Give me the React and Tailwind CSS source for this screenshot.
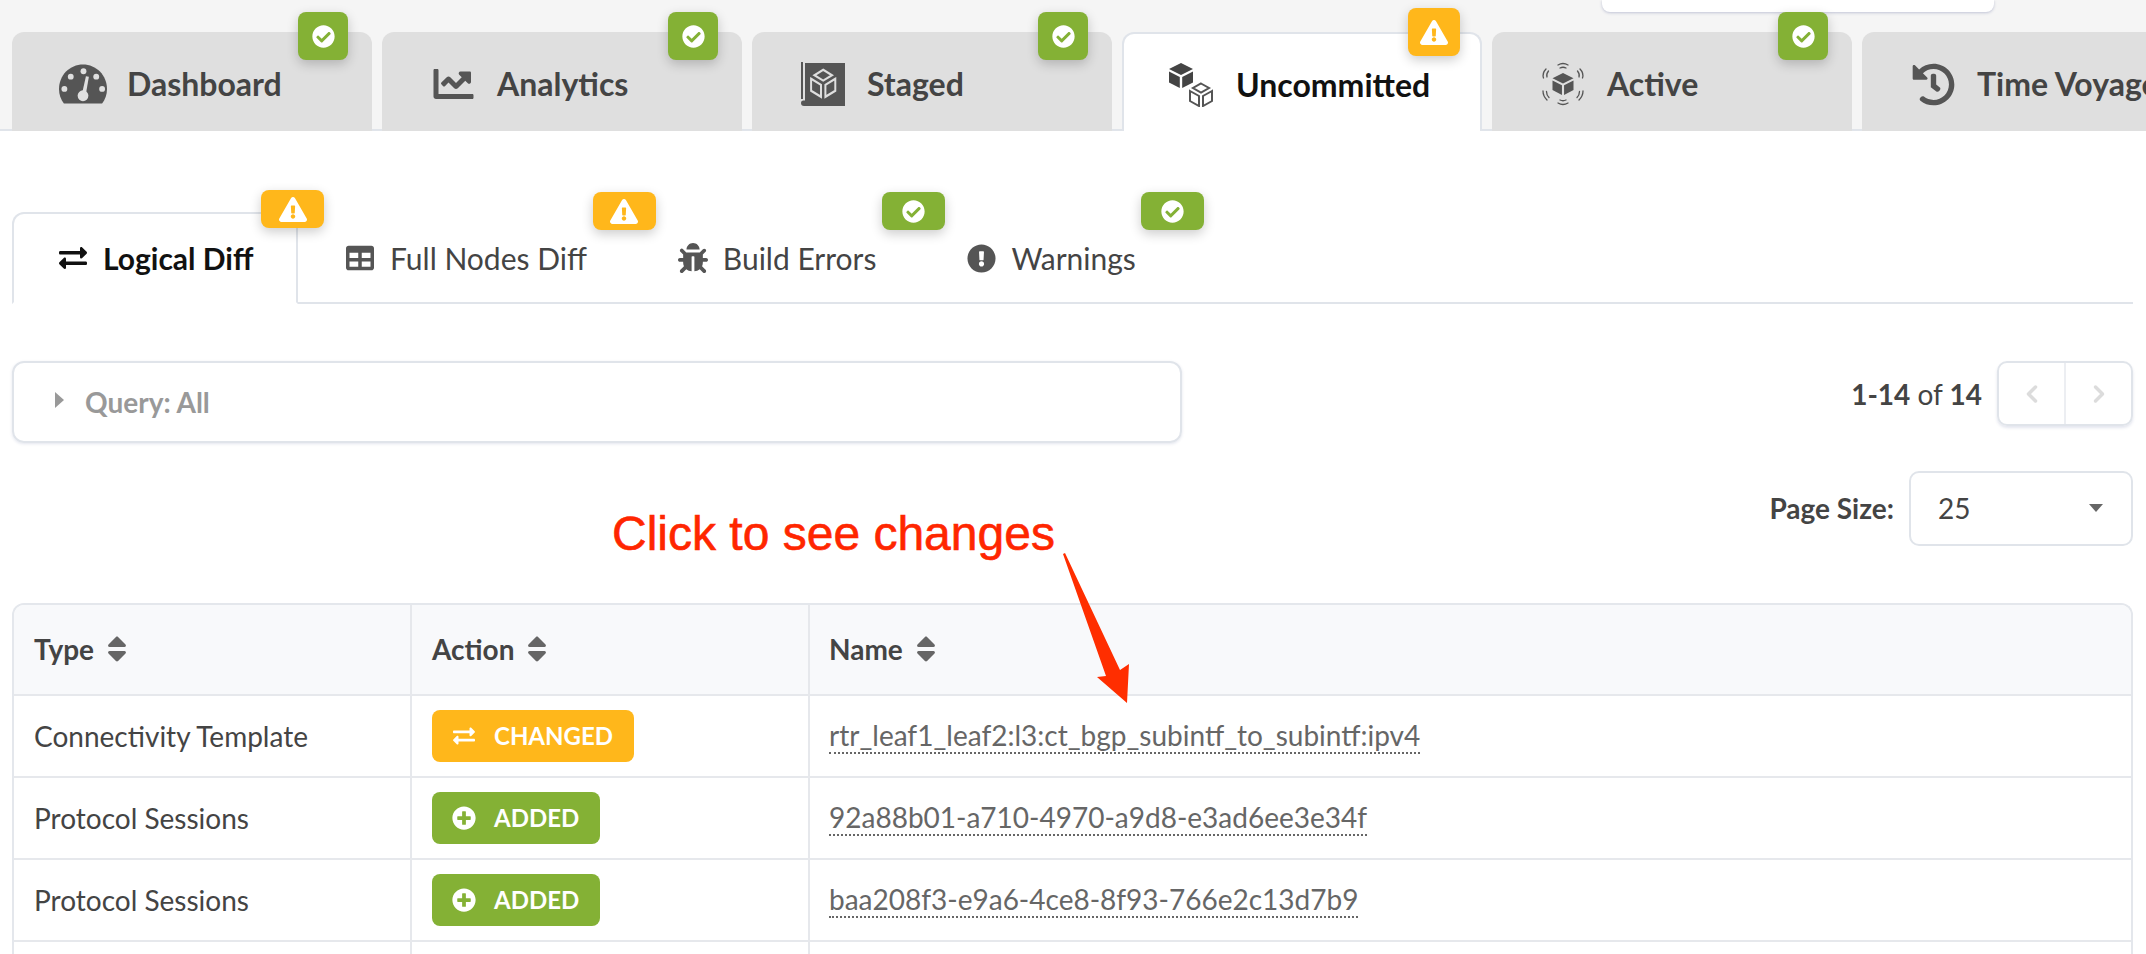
import React from "react";
import {
  FaChartLine,
  FaHistory,
  FaExchangeAlt,
  FaTable,
  FaBug,
  FaExclamationCircle,
  FaCheckCircle,
  FaExclamationTriangle,
  FaPlusCircle,
  FaSort,
} from "react-icons/fa";
import { ChevronLeft, ChevronRight } from "lucide-react";

const GaugeIcon = () => (
  <svg viewBox="0 0 49 40" className="w-[49px] h-[40px]">
    <path
      fill="#555"
      d="M5 40C2 36 0 31 0 25C0 11 11 0 24.5 0S49 11 49 25C49 31 47 36 44 40Z"
    />
    <g fill="#dfdfdf">
      <circle cx="25" cy="7" r="3" />
      <circle cx="12" cy="12.5" r="3" />
      <circle cx="38" cy="12.5" r="3" />
      <circle cx="5.5" cy="25" r="3" />
      <circle cx="44" cy="25" r="3" />
      <circle cx="24.5" cy="32" r="5.5" />
      <path d="M27.5 12L30.5 12.5L27.5 30L23.5 30Z" />
    </g>
  </svg>
);

const SolidCube = ({ fill = "#555" }) => (
  <g fill={fill}>
    <path d="M12 0L24 6L12 12L0 6Z" />
    <path d="M0 8.5L10.8 14V25L0 19.500Z" />
    <path d="M24 8.5L13.2 14V25L24 19.500Z" />
  </g>
);

const OutlineCube = ({ stroke = "#555", width = 2 }) => (
  <g fill="none" stroke={stroke} strokeWidth={width}>
    <path d="M12 1.500L20 6L12 10.500L4 6Z" />
    <path d="M1 9L10 14V24L1 19Z" />
    <path d="M23 9L14 14V24L23 19Z" />
  </g>
);

const StagedIcon = () => (
  <svg viewBox="0 0 44 44" className="w-[44px] h-[44px]">
    <path fill="#555" d="M0 0H2V37H0ZM4 1H44V44H3C1 44 0 43 0 41C0 39 1 38.500 4 38.500Z" />
    <g transform="translate(9 6) scale(1.1 1.2)">
      <OutlineCube stroke="#dfdfdf" width={1.8} />
    </g>
  </svg>
);

const UncommittedIcon = () => (
  <svg viewBox="0 0 46 44" className="w-[46px] h-[44px]">
    <SolidCube fill="#444" />
    <g transform="translate(20 19)">
      <OutlineCube stroke="#555" />
    </g>
  </svg>
);

const ActiveIcon = () => (
  <svg viewBox="0 0 44 44" className="w-[44px] h-[44px]">
    <g transform="translate(11.500 11) scale(0.875)">
      <SolidCube />
    </g>
    <g fill="none" stroke="#555" strokeWidth="1.300" strokeLinecap="round">
      <path d="M17 3Q22 0 27 3M19 6Q22 4.500 25 6" />
      <path d="M17 41Q22 44 27 41M19 38Q22 39.500 25 38" />
      <path d="M2.500 16Q1 11 5 7M6 15Q5 12 7.500 9" />
      <path d="M41.500 16Q43 11 39 7M38 15Q39 12 36.500 9" />
      <path d="M2 29Q2 34 6 38M5.500 29.500Q5.500 33 8 35.500" />
      <path d="M42 29Q42 34 38 38M38.500 29.500Q38.500 33 36 35.500" />
    </g>
  </svg>
);

const StatusBadge = ({ warn, className }) => (
  <div
    className={`absolute flex items-center justify-center rounded-[8px] shadow-[0_4px_12px_rgba(0,0,0,0.2)] ${
      warn ? "bg-[#ffb71b]" : "bg-[#84b135]"
    } ${className}`}
  >
    {warn ? (
      <FaExclamationTriangle className="text-white w-[28px] h-[25px]" />
    ) : (
      <FaCheckCircle className="text-white w-[23px] h-[23px]" />
    )}
  </div>
);

const TOP_TABS = [
  { label: "Dashboard", icon: <GaugeIcon /> },
  { label: "Analytics", icon: <FaChartLine className="w-[45px] h-[40px]" /> },
  { label: "Staged", icon: <StagedIcon /> },
  { label: "Uncommitted", icon: <UncommittedIcon />, active: true, warn: true },
  { label: "Active", icon: <ActiveIcon /> },
  { label: "Time Voyager", icon: <FaHistory className="w-[43px] h-[43px]" />, noBadge: true },
];

const SUB_TABS = [
  { label: "Logical Diff", icon: <FaExchangeAlt className="w-[30px] h-[28px]" />, active: true, warn: true, badge: "-right-[28px] -top-[24px]" },
  { label: "Full Nodes Diff", icon: <FaTable className="w-[30px] h-[28px]" />, warn: true, badge: "-right-[25px] -top-[20px]" },
  { label: "Build Errors", icon: <FaBug className="w-[30px] h-[30px]" />, badge: "-right-[25px] -top-[20px]" },
  { label: "Warnings", icon: <FaExclamationCircle className="w-[29px] h-[29px]" />, badge: "-right-[24px] -top-[20px]" },
];

const ROWS = [
  { type: "Connectivity Template", action: "CHANGED", name: "rtr_leaf1_leaf2:l3:ct_bgp_subintf_to_subintf:ipv4" },
  { type: "Protocol Sessions", action: "ADDED", name: "92a88b01-a710-4970-a9d8-e3ad6ee3e34f" },
  { type: "Protocol Sessions", action: "ADDED", name: "baa208f3-e9a6-4ce8-8f93-766e2c13d7b9" },
  { type: "", action: "", name: "" },
];

const HeaderCell = ({ label, last, pad = "pl-[20px]" }) => (
  <div className={`flex items-center pb-[2px] ${pad} gap-[13px] ${last ? "" : "border-r-2 border-[#e6e8ec]"}`}>
    <span className="text-[28px] font-bold text-[#444]">{label}</span>
    <FaSort className="w-[20px] h-[32px] text-[#666]" />
  </div>
);

export default function App() {
  return (
    <div className="relative w-[2146px] h-[954px] overflow-hidden bg-white font-['Lato',sans-serif] text-[#444]">
      {/* top nav */}
      <div className="relative h-[131px] bg-[#f5f5f5] border-b-2 border-[#e0e4ea] pl-[12px] pt-[32px] flex gap-[10px]">
        <div className="absolute left-[1602px] top-0 w-[392px] h-[12px] bg-white rounded-b-[8px] shadow-[0_1px_3px_rgba(70,80,140,0.3)]" />
        {TOP_TABS.map((tab) => (
          <div
            key={tab.label}
            className={`relative shrink-0 w-[360px] h-[99px] rounded-t-[12px] pt-[5px] flex items-center gap-[20px] ${
              tab.active
                ? "pl-[44px] bg-white border-2 border-b-0 border-[#e0e4ea] text-[#111] z-10"
                : "pl-[47px] bg-[#dfdfdf] text-[#444]"
            }`}
          >
            <span className="w-[48px] flex justify-center shrink-0 text-[#555]">{tab.icon}</span>
            <span className="text-[32px] font-bold whitespace-nowrap">{tab.label}</span>
            {!tab.noBadge && (
              <StatusBadge
                warn={tab.warn}
                className={
                  tab.warn
                    ? "w-[52px] h-[48px] right-[20px] -top-[26px]"
                    : "w-[50px] h-[48px] right-[24px] -top-[20px]"
                }
              />
            )}
          </div>
        ))}
      </div>

      {/* sub tabs */}
      <div className="pt-[81px] px-[12px]">
        <div className="flex w-[2121px] h-[92px] border-b-2 border-[#e0e4ea]">
          {SUB_TABS.map((tab) => (
            <div
              key={tab.label}
              className={`relative h-[92px] pr-[44px] flex items-center gap-[15px] ${
                tab.active
                  ? "pl-[44px] bg-white border-2 border-b-white border-[#e0e4ea] rounded-t-[12px] text-[#111] w-[286px]"
                  : "pl-[47px] text-[#444]"
              }`}
            >
              <span className={tab.active ? "text-[#111]" : "text-[#555]"}>{tab.icon}</span>
              <span className={`text-[30px] whitespace-nowrap ${tab.active ? "font-bold" : ""}`}>{tab.label}</span>
              <StatusBadge warn={tab.warn} className={`w-[63px] h-[38px] ${tab.badge}`} />
            </div>
          ))}
        </div>

        {/* query + pager */}
        <div className="flex justify-between w-[2121px] mt-[57px]">
          <div className="w-[1170px] h-[82px] border-2 border-[#e0e4ea] rounded-[12px] shadow-[0_1px_3px_rgba(70,80,140,0.15)] flex items-center pl-[41px] gap-[21px]">
            <span className="w-0 h-0 border-y-[8px] border-y-transparent border-l-[9px] border-l-[#999] -mt-[4px]" />
            <span className="text-[28px] font-bold text-[#999]">Query: All</span>
          </div>
          <div className="flex flex-col items-end gap-[45px]">
            <div className="flex items-center gap-[15px]">
              <span className="text-[28px] text-[#444]">
                <b>1-14</b> of <b>14</b>
              </span>
              <div className="flex w-[136px] h-[65px] border-2 border-[#e0e4ea] rounded-[10px] shadow-[0_2px_3px_rgba(70,80,140,0.15)]">
                <div className="flex-1 flex items-center justify-center border-r-2 border-[#eceef2]">
                  <ChevronLeft className="w-[28px] h-[28px] text-[#dcdcdc]" strokeWidth={3} />
                </div>
                <div className="flex-1 flex items-center justify-center">
                  <ChevronRight className="w-[28px] h-[28px] text-[#dcdcdc]" strokeWidth={3} />
                </div>
              </div>
            </div>
            <div className="flex items-center gap-[15px]">
              <span className="text-[28px] font-bold pb-[2px]">Page Size:</span>
              <div className="w-[224px] h-[75px] border-2 border-[#e0e4ea] rounded-[10px] flex items-center justify-between pl-[27px] pr-[28px] pb-[2px]">
                <span className="text-[28px]">25</span>
                <span className="w-0 h-0 border-x-[7px] border-x-transparent border-t-[8px] border-t-[#666]" />
              </div>
            </div>
          </div>
        </div>

        {/* table */}
        <div className="w-[2121px] mt-[57px] border-2 border-b-0 border-[#e4e7ec] rounded-t-[12px] overflow-hidden">
          <div className="grid grid-cols-[398px_398px_1fr] h-[91px] bg-[#f8f9fb] border-b-2 border-[#e6e8ec]">
            <HeaderCell label="Type" />
            <HeaderCell label="Action" />
            <HeaderCell label="Name" last pad="pl-[19px]" />
          </div>
          {ROWS.map((row, i) => (
            <div key={i} className="grid grid-cols-[398px_398px_1fr] h-[82px] border-b-2 border-[#e6e8ec]">
              <div className="flex items-center pb-[1px] pl-[20px] border-r-2 border-[#e6e8ec] text-[28px]">{row.type}</div>
              <div className="flex items-center pl-[20px] border-r-2 border-[#e6e8ec]">
                {row.action && (
                  <span
                    className={`flex items-center h-[52px] rounded-[8px] text-white text-[24px] font-bold ${
                      row.action === "CHANGED" ? "bg-[#ffb71b] w-[202px]" : "bg-[#84b135] w-[168px]"
                    } pl-[20px] gap-[18px]`}
                  >
                    {row.action === "CHANGED" ? (
                      <FaExchangeAlt className="w-[24px] h-[22px]" />
                    ) : (
                      <FaPlusCircle className="w-[24px] h-[24px]" />
                    )}
                    {row.action}
                  </span>
                )}
              </div>
              <div className="flex items-center pl-[19px]">
                <span className="text-[28px] text-[#666] border-b-2 border-dotted border-[#666] leading-[34px]">{row.name}</span>
              </div>
            </div>
          ))}
        </div>
      </div>

      {/* annotation over the table */}
      <span className="absolute left-[612px] top-[506px] text-[48px] leading-[56px] text-[#ff2600] [-webkit-text-stroke:0.6px_#ff2600] font-['Liberation_Sans',Arial,sans-serif] whitespace-nowrap">
        Click to see changes
      </span>
      <svg className="absolute left-0 top-0 pointer-events-none" width="2146" height="954">
        <path fill="#ff2e00" d="M1063 554L1065 553L1120 670L1129 664L1127 703L1097 677L1106 676Z" />
      </svg>
    </div>
  );
}
